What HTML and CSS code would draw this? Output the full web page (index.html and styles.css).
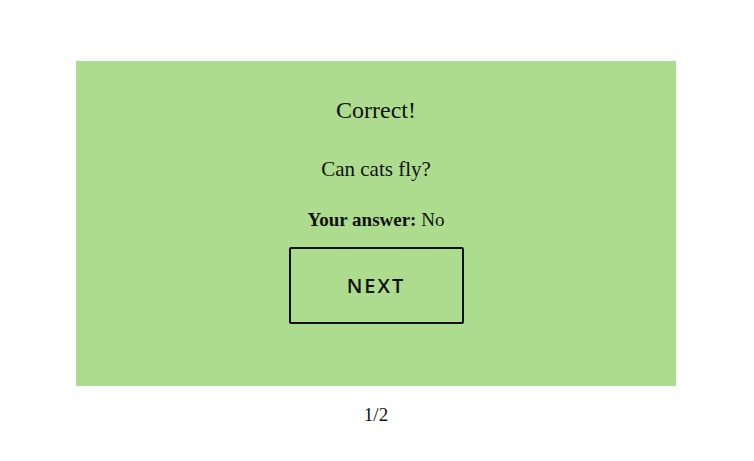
FILE: index.html
```html
<!DOCTYPE html>
<html>
<head>
<meta charset="utf-8">
<link rel="stylesheet" href="styles.css">
</head>
<body>
<main class="page">
  <section class="card">
    <h2 class="result">Correct!</h2>
    <p class="question">Can cats fly?</p>
    <p class="answer"><strong>Your answer:</strong> No</p>
    <button class="next">NEXT</button>
  </section>
  <div class="progress">1/2</div>
</main>
</body>
</html>
```

FILE: styles.css
```css
html, body {
  margin: 0;
  padding: 0;
  background: #fff;
}
.page {
  width: 752px;
  display: flex;
  flex-direction: column;
  align-items: center;
  padding-top: 61px;
  font-family: "Liberation Serif", serif;
  color: #111;
}
.card {
  width: 600px;
  height: 325px;
  box-sizing: border-box;
  background: #addc8e;
  display: flex;
  flex-direction: column;
  align-items: center;
  padding-top: 36px;
}
.result {
  margin: 0;
  font-weight: normal;
  font-size: 24px;
  line-height: 26px;
}
.question {
  margin: 34px 0 0;
  font-size: 21px;
  line-height: 24px;
}
.answer {
  margin: 28px 0 0;
  font-size: 19px;
  line-height: 22px;
}
.next {
  margin-top: 16px;
  width: 175px;
  height: 77px;
  background: transparent;
  border: 2px solid #111;
  border-radius: 2px;
  font-family: "Open Sans", sans-serif;
  font-weight: 600;
  font-size: 20px;
  letter-spacing: 2px;
  color: #111;
  cursor: pointer;
}
.progress {
  margin-top: 18px;
  font-size: 19px;
  line-height: 22px;
}
```
